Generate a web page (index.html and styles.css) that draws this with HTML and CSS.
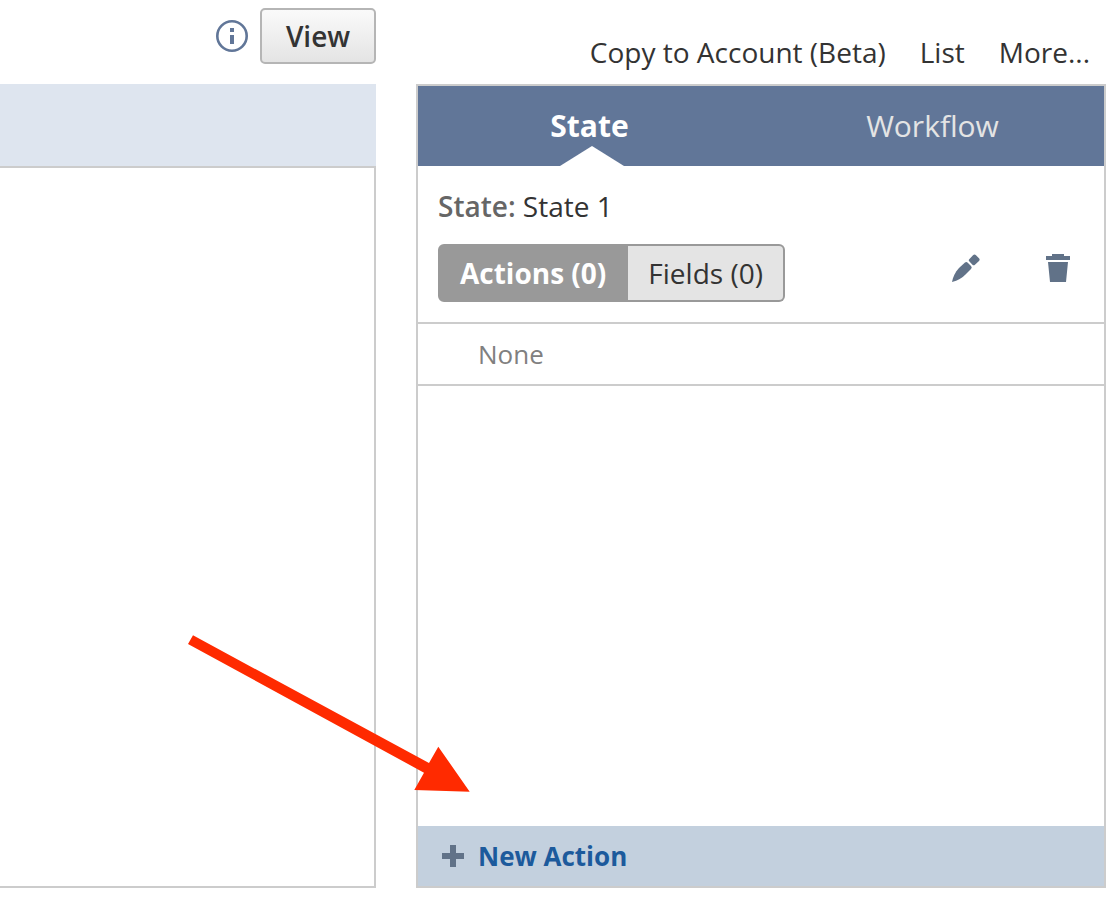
FILE: index.html
```
<!DOCTYPE html>
<html lang="en">
<head>
    <meta charset="UTF-8">
    <meta name="viewport" content="width=device-width, initial-scale=1.0">
    <title>Workflow Editor</title>
    <link rel="stylesheet" href="styles.css">
</head>
<body>
    <div class="page">
        <!-- Canvas -->
        <main class="canvas">
            <div class="canvas-tools">
                <svg class="info" viewBox="0 0 32 32" role="img" aria-label="Info">
                    <circle cx="16" cy="16" r="14.7" fill="none" stroke="#617698" stroke-width="2.6"/>
                    <path d="M14 8h4v4h-4zM14 15h4v9h-4z" fill="#617698"/>
                </svg>
                <button class="view-button" type="button">View</button>
            </div>
            <div class="canvas-header"></div>
            <div class="canvas-body"></div>
        </main>

        <!-- Side panel -->
        <aside class="side">
            <nav class="links">
                <a href="#">Copy to Account (Beta)</a>
                <a href="#">List</a>
                <a href="#">More...</a>
            </nav>
            <section class="panel">
                <div class="tabs">
                    <button class="tab active" type="button">State</button>
                    <button class="tab" type="button">Workflow</button>
                </div>
                <div class="details">
                    <div class="state-name"><b>State:</b> State 1</div>
                    <div class="controls">
                        <div class="toggle">
                            <button class="toggle-button selected" type="button">Actions (0)</button>
                            <button class="toggle-button" type="button">Fields (0)</button>
                        </div>
                        <div class="icons">
                            <button class="icon-button" type="button" aria-label="Edit">
                                <svg viewBox="0 0 28 28">
                                    <path d="M0 28C1 23 3 18 7 14L13 8.500Q14.500 7.500 16 9L19 12Q20.500 13.500 19 15L13.500 20.500C10 24 6 26.500 0 28z"/>
                                    <path d="M17 5.500L21 1.200Q22.500 0 24 1.200L27 4.200Q28.300 5.500 27 7L22.700 11Q21.700 11.700 20.700 10.900L17.200 7.300Q16.400 6.400 17 5.500z"/>
                                </svg>
                            </button>
                            <button class="icon-button" type="button" aria-label="Delete">
                                <svg viewBox="0 0 28 28">
                                    <path d="M2 2h6V0h12v2h6v4H2zM4 8h20l-2 20H6z"/>
                                </svg>
                            </button>
                        </div>
                    </div>
                </div>
                <div class="empty">None</div>
                <button class="new-action" type="button">
                    <svg viewBox="0 0 22 22"><path d="M8 0h6v8h8v6h-8v8H8v-8H0V8h8z"/></svg>
                    New Action
                </button>
            </section>
        </aside>

        <!-- Pointer to the New Action button -->
        <svg class="arrow" viewBox="0 0 284 160">
            <path d="M1 10L6 1.300L242 129L251.300 112.700L282.700 157.700L227.300 156L237 138.700z"/>
        </svg>
    </div>
</body>
</html>
```

FILE: styles.css
```
:root {
    --blue: #617698;
    --icon: #617288;
    --line: #ccc;
}

* {
    box-sizing: border-box;
}

body {
    margin: 0;
    background: #fff;
    color: #333;
    font-family: "Open Sans", "Noto Sans", sans-serif;
    font-size: 28px;
    line-height: 36px;
}

button {
    font: inherit;
    color: inherit;
    border: none;
    background: none;
    padding: 0;
    cursor: pointer;
}

.page {
    position: relative;
    display: grid;
    grid-template-columns: 376fr 690fr;
    gap: 40px;
    min-height: 100vh;
    padding: 0 8px 22px 0;
}

.canvas,
.side {
    display: flex;
    flex-direction: column;
}

/* Canvas */
.canvas-tools {
    display: flex;
    justify-content: flex-end;
    align-items: center;
    gap: 12px;
    height: 84px;
    padding-bottom: 12px;
}

.info {
    width: 32px;
    height: 32px;
    overflow: visible;
}

.view-button {
    width: 116px;
    height: 56px;
    border: 2px solid #b5b5b5;
    border-radius: 5px;
    background: linear-gradient(#fafafa, #e4e4e4);
    font-weight: 600;
}

.canvas-header {
    height: 82px;
    background: #dee5ef;
}

.canvas-body {
    flex: 1;
    border: 2px solid var(--line);
    border-left: none;
}

/* Side panel */
.links {
    display: flex;
    justify-content: flex-end;
    gap: 34px;
    height: 84px;
    padding: 34px 16px 0 0;
}

.links a {
    color: #333;
    text-decoration: none;
}

.panel {
    flex: 1;
    display: flex;
    flex-direction: column;
    border: 2px solid var(--line);
}

.tabs {
    display: grid;
    grid-template-columns: 1fr 1fr;
    height: 80px;
    background: var(--blue);
    color: #e4e4e4;
    font-size: 30px;
}

.tab.active {
    position: relative;
    color: #fff;
    font-weight: bold;
}

.tab.active::after {
    content: "";
    position: absolute;
    left: 50%;
    bottom: 0;
    margin-left: -30px;
    border: 32px solid transparent;
    border-top: none;
    border-bottom: 20px solid #fff;
}

.details {
    padding: 22px 32px 20px 20px;
    border-bottom: 2px solid var(--line);
}

.state-name b {
    color: #666;
    font-weight: 600;
}

.controls {
    display: flex;
    justify-content: space-between;
    margin-top: 20px;
}

.toggle {
    display: flex;
}

.toggle-button {
    height: 58px;
    padding: 0 20px;
    border: 2px solid #999;
    border-left: none;
    border-radius: 0 6px 6px 0;
    background: #e4e4e4;
}

.toggle-button.selected {
    border: 2px solid #999;
    border-radius: 6px 0 0 6px;
    background: #999;
    color: #fff;
    font-weight: bold;
}

.icons {
    display: flex;
    gap: 64px;
    padding-top: 10px;
}

.icon-button {
    width: 28px;
    height: 28px;
}

.icon-button svg {
    display: block;
    fill: var(--icon);
}

.empty {
    height: 62px;
    padding: 12px 60px;
    border-bottom: 2px solid var(--line);
    color: #808080;
    font-size: 26px;
}

.new-action {
    display: flex;
    align-items: center;
    gap: 14px;
    height: 60px;
    margin-top: auto;
    padding: 0 24px;
    background: #c3d0de;
    color: #1c5a9c;
    font-size: 26px;
    font-weight: bold;
}

.new-action svg {
    width: 22px;
    height: 22px;
    fill: var(--icon);
}

.arrow {
    position: absolute;
    top: 634px;
    left: 187px;
    width: 284px;
    height: 160px;
    fill: #ff2a00;
    pointer-events: none;
}
```
